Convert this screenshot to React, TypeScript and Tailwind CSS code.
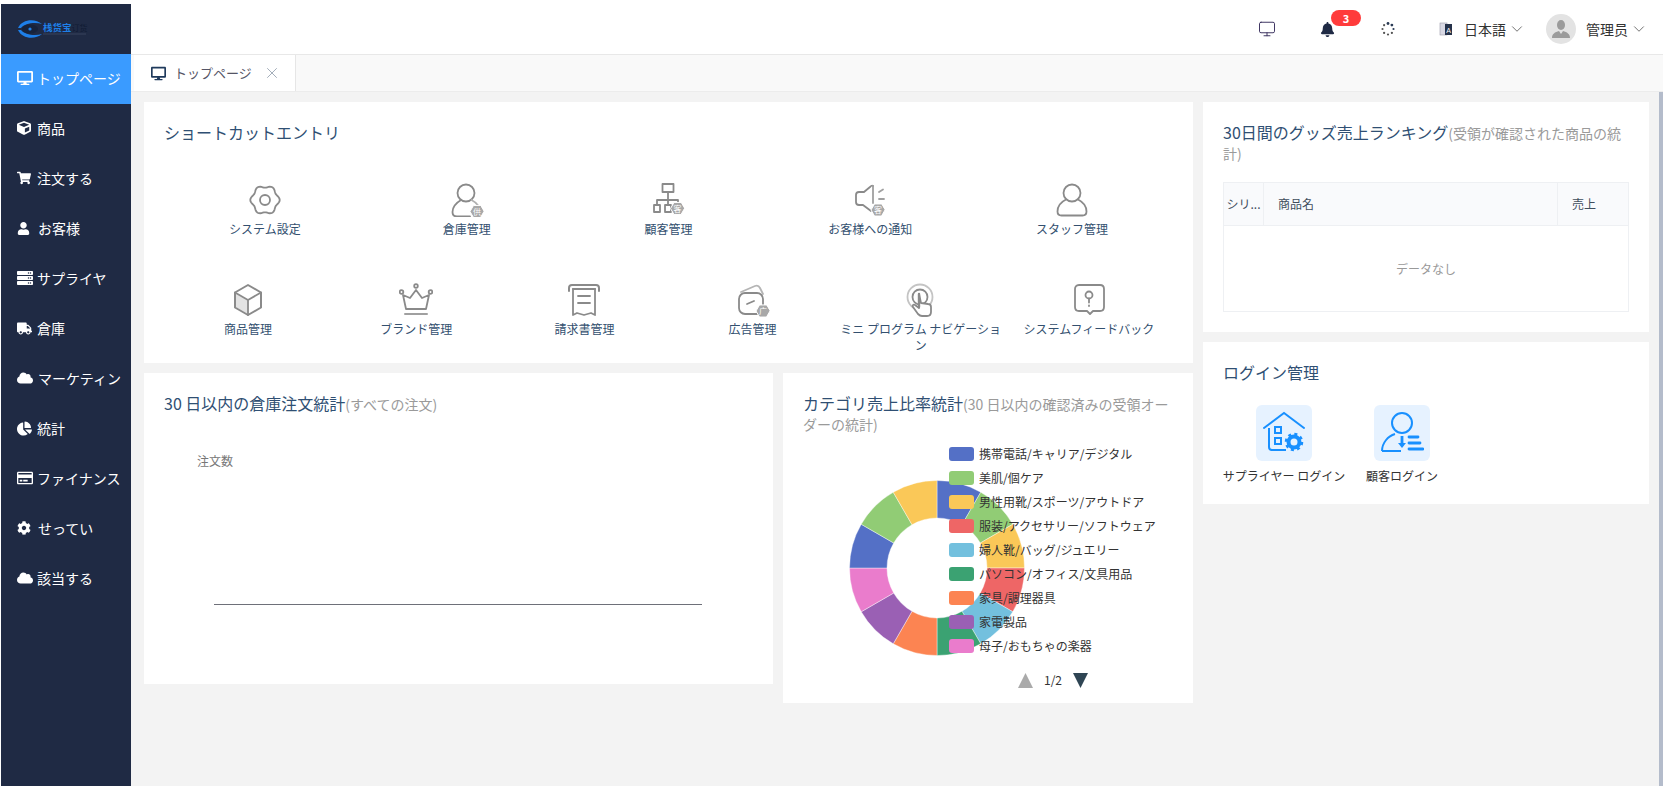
import { ChevronDown, Monitor, X } from "lucide-react";
import type { ReactNode } from "react";
import {
  FaBell,
  FaChartPie,
  FaCloud,
  FaCog,
  FaCube,
  FaDesktop,
  FaRegCreditCard,
  FaServer,
  FaShoppingCart,
  FaTruck,
  FaUser,
} from "react-icons/fa";

const menu = [
  { label: "トップページ", icon: <FaDesktop size={16} />, w: "w-[20px]", active: true },
  { label: "商品", icon: <FaCube size={14} />, w: "w-[20px]" },
  { label: "注文する", icon: <FaShoppingCart size={14} />, w: "w-[20px]" },
  { label: "お客様", icon: <FaUser size={13} />, w: "w-[21px]" },
  { label: "サプライヤ", icon: <FaServer size={16} />, w: "w-[20px]" },
  { label: "倉庫", icon: <FaTruck size={15} />, w: "w-[20px]" },
  { label: "マーケティン", icon: <FaCloud size={16} />, w: "w-[21px]" },
  { label: "統計", icon: <FaChartPie size={15} />, w: "w-[20px]" },
  { label: "ファイナンス", icon: <FaRegCreditCard size={16} />, w: "w-[20px]" },
  { label: "せってい", icon: <FaCog size={14} />, w: "w-[21px]" },
  { label: "該当する", icon: <FaCloud size={16} />, w: "w-[20px]" },
];

const g = { fill: "none", stroke: "#8a8a8a", strokeWidth: 1.8, strokeLinecap: "round", strokeLinejoin: "round" } as const;

function Badge({ x = 27, y = 27, ch }: { x?: number; y?: number; ch: string }) {
  const r = 7;
  const pts = [0, 60, 120, 180, 240, 300]
    .map((a) => `${x + r * Math.cos((a * Math.PI) / 180)},${y + r * Math.sin((a * Math.PI) / 180)}`)
    .join(" ");
  return (
    <g>
      <polygon points={pts} fill="#a8a8a8" stroke="#fff" strokeWidth={1} />
      <text x={x} y={y + 3} fontSize={8} fill="#fff" stroke="none" textAnchor="middle" fontFamily="'Noto Sans CJK SC', sans-serif">
        {ch}
      </text>
    </g>
  );
}

// six lobed outline of the settings icon
const flower = Array.from({ length: 73 }, (_, i) => {
  const t = (i * 5 * Math.PI) / 180;
  const r = 13.5 + 1.2 * Math.cos(6 * t);
  return `${i === 0 ? "M" : "L"}${(17 + r * Math.cos(t)).toFixed(2)} ${(17 + r * Math.sin(t)).toFixed(2)}`;
}).join(" ");

const icons: Record<string, ReactNode> = {
  gear: (
    <g {...g}>
      <path d={flower} />
      <circle cx="17" cy="17" r="5" />
    </g>
  ),
  person: (
    <g {...g}>
      <circle cx="16" cy="10" r="8.500" />
      <path d="M11 17C6 20 2.500 24 2.500 29c0 3 2 4.500 4.500 4.500h13" />
      <path d="M21.500 17c3 1.500 5.500 3.500 7 6" stroke="#b0b0b0" />
      <Badge x={27} y={28.500} ch="供" />
    </g>
  ),
  org: (
    <g {...g}>
      <rect x="11.500" y="1" width="11" height="8" />
      <path d="M17 9v13M6 22v-5h21v3" />
      <rect x="3" y="22" width="6" height="7" />
      <rect x="14" y="22" width="6" height="7" />
      <Badge x={26.500} y={25.500} ch="客" />
    </g>
  ),
  notice: (
    <g {...g}>
      <path d="M20 3c-1-1-2 0-3 1l-6 5H6c-2 0-3 1.500-3 3v7c0 2 1 3 3 3h4l8 6" />
      <path d="M20 3v17M26 9l4-2.500M26 16h5" stroke="#a0a0a0" />
      <Badge x={25} y={27} ch="客" />
    </g>
  ),
  staff: (
    <g {...g}>
      <circle cx="17" cy="10" r="8.500" />
      <path d="M11 16.500C6 19 2.500 23 2.500 28.500c0 3 2 4 4 4h21c2 0 4-1 4-4 0-5.500-3.500-9.500-8.500-12" />
    </g>
  ),
  box: (
    <g {...g}>
      <path d="M4.500 10.500L17 17.500V31L4.500 24z" fill="#e3e3e3" stroke="none" />
      <path d="M17 2l13 7.500v15L17 32 4 24.500v-15z" strokeWidth={2} />
      <path d="M4 9.500L17 17l13-7.500M17 17v15" />
    </g>
  ),
  crown: (
    <g {...g}>
      <circle cx="17" cy="3" r="1.800" />
      <circle cx="2.500" cy="9" r="1.800" />
      <circle cx="31.500" cy="9" r="1.800" />
      <path d="M17 7l-6 8-7-3 3 14h20l3-14-7 3z" />
      <path d="M6 31h22" strokeWidth={2} stroke="#a0a0a0" />
    </g>
  ),
  bill: (
    <g {...g}>
      <path d="M2 8V5c0-1.500 1-3 3-3h24c2 0 3 1.500 3 3v3" strokeWidth={2} />
      <path d="M6 6h22" strokeWidth={2} />
      <path d="M6 6v26l4-2 7 2 7-2 4 2V6" />
      <path d="M11 13h12M11 20h12" />
    </g>
  ),
  ad: (
    <g {...g}>
      <path d="M5 9l14-6c2-.8 4 0 5 2l3 6" stroke="#b5b5b5" />
      <rect x="3" y="10" width="24" height="21" rx="6" />
      <path d="M11 21l7-3" />
      <Badge x={27} y={28} ch="广" />
    </g>
  ),
  touch: (
    <g {...g}>
      <circle cx="16" cy="14" r="12.500" stroke="#c4c4c4" />
      <circle cx="16" cy="14" r="7.500" />
      <path d="M15 11v14l-4-3c-2-1-3 1-2 2l5 7c1 1 2 2 4 2h5c3 0 4-2 4-4v-5c0-2-1-3-3-3l-7-1z" fill="#fff" />
      <path d="M15 11v13" strokeWidth={2.400} />
    </g>
  ),
  help: (
    <g {...g}>
      <path d="M7 2h21c3 0 4 2 4 4v18c0 3-2 4-4 4h-7l-3 3-3-3H7c-3 0-4-2-4-4V6c0-2 1-4 4-4z" strokeWidth={1.800} />
      <circle cx="17" cy="12" r="3.500" />
      <path d="M17 15.500v4M17 22.500v.5" />
    </g>
  ),
};

function Shortcut({ icon, label, lw }: { icon: string; label: string; lw?: string }) {
  return (
    <div className="flex flex-col items-center h-[100px]">
      <svg width="34" height="34" viewBox="0 0 34 34" className="shrink-0">
        {icons[icon]}
      </svg>
      <div className={`mt-[4px] text-center text-[12px] leading-[16px] text-[#33506f] ${lw ?? ""}`}>{label}</div>
    </div>
  );
}

function Donut() {
  const colors = ["#5470c6", "#91cc75", "#fac858", "#ee6666", "#73c0de", "#3ba272", "#fc8452", "#9a60b4", "#ea7ccc", "#5470c6", "#91cc75", "#fac858"];
  const R = 87.5;
  const r = 50;
  const c = 88;
  const pt = (rad: number, deg: number) => {
    const a = ((deg - 90) * Math.PI) / 180;
    return `${c + rad * Math.cos(a)} ${c + rad * Math.sin(a)}`;
  };
  return (
    <svg width="176" height="176" viewBox="0 0 176 176">
      {colors.map((col, i) => {
        const a0 = i * 30;
        const a1 = a0 + 30;
        return (
          <path
            key={i}
            fill={col}
            stroke="#fff"
            strokeWidth={0.4}
            d={`M${pt(R, a0)} A${R} ${R} 0 0 1 ${pt(R, a1)} L${pt(r, a1)} A${r} ${r} 0 0 0 ${pt(r, a0)} Z`}
          />
        );
      })}
    </svg>
  );
}

const legend = [
  ["携帯電話/キャリア/デジタル", "bg-[#5470c6]"],
  ["美肌/個ケア", "bg-[#91cc75]"],
  ["男性用靴/スポーツ/アウトドア", "bg-[#fac858]"],
  ["服装/アクセサリー/ソフトウェア", "bg-[#ee6666]"],
  ["婦人靴/バッグ/ジュエリー", "bg-[#73c0de]"],
  ["パソコン/オフィス/文具用品", "bg-[#3ba272]"],
  ["家具/調理器具", "bg-[#fc8452]"],
  ["家電製品", "bg-[#9a60b4]"],
  ["母子/おもちゃの楽器", "bg-[#ea7ccc]"],
];

function Title({ children, sub }: { children: ReactNode; sub?: string }) {
  return (
    <div className="text-[16px] leading-[20px] text-[#2f4f73]">
      {children}
      {sub && <span className="text-[14px] leading-[16px] text-[#9a9a9a]">{sub}</span>}
    </div>
  );
}

export default function App() {
  return (
    <div
      className="h-[786px] w-[1663px] flex overflow-hidden bg-white pl-px pt-1"
      style={{ fontFamily: "'Noto Sans CJK JP', 'Noto Sans', sans-serif" }}
    >
      <aside className="w-[130px] shrink-0 bg-[#1f2a44] flex flex-col -mb-px">
        <div className="h-[50px] flex items-center pl-[17px] gap-[1px]">
          <svg width="24" height="18" viewBox="0 0 24 18">
            <path d="M0 8C4 -1 17 -2 24 4 17 2 7 3 3 8zM0 10c4 9 17 10 24 4-7 2-17 1-21-4z" fill="#1e7fe8" />
            <ellipse cx="12" cy="9" rx="8" ry="4.500" fill="#17233c" />
            <circle cx="12" cy="9" r="1.600" fill="#1e7fe8" />
          </svg>
          <div className="flex flex-col gap-[1px]">
            <div className="flex items-center">
              <span className="text-[9.500px] font-bold text-[#1e7fe8] leading-none">栈货宝</span>
              <span className="text-[8px] text-[#101b33] leading-none">订货</span>
            </div>
            <div className="w-[43px] h-[2px] bg-[#2b3650]" />
          </div>
        </div>
        {menu.map((m) => (
          <div
            key={m.label}
            className={`h-[50px] flex items-center pl-[16px] pb-[2px] text-[14px] text-white whitespace-nowrap overflow-hidden ${m.active ? "bg-[#3a9bff]" : ""}`}
          >
            <span className={`flex justify-start shrink-0 ${m.w}`}>{m.icon}</span>
            {m.label}
          </div>
        ))}
      </aside>

      <div className="flex-1 min-w-0 flex flex-col -mt-1">
        <header className="h-[55px] shrink-0 pt-[4px] border-b border-[#e8e8e8] flex items-center justify-end text-[14px] text-[#333]">
          <Monitor size={18} strokeWidth={1.300} className="text-[#3c3260] mr-[44px]" />
          <div className="relative mr-[46px]">
            <FaBell size={15} className="text-[#1f2a44]" />
            <span className="absolute -top-[12px] left-[11px] w-[30px] h-[16px] rounded-full bg-[#ff3b3b] text-white text-[11px] font-bold leading-[16px] text-center">
              3
            </span>
          </div>
          <svg width="14" height="14" viewBox="0 0 14 14" className="mr-[44px]">
            {[0, 45, 90, 135, 180, 225, 270, 315].map((a, i) => (
              <circle key={a} cx="7" cy="1.500" r={i < 2 ? 1.400 : 1.100} fill={i < 3 ? "#2a3b55" : "#555"} transform={`rotate(${a} 7 7)`} />
            ))}
          </svg>
          <svg width="14" height="16" viewBox="0 0 14 16" className="mr-[11px]">
            <rect x="1" y="2" width="7" height="12" fill="#d9d9e4" stroke="#9a9aa8" strokeWidth={0.6} />
            <rect x="6" y="3" width="7" height="11" fill="#26324a" />
            <text x="9.500" y="12" fontSize={7} fill="#fff" textAnchor="middle" fontFamily="'Liberation Sans', sans-serif">
              A
            </text>
          </svg>
          <span>日本語</span>
          <ChevronDown size={18} strokeWidth={1} className="ml-[2px] mr-[20px] text-[#444]" />
          <div className="w-[30px] h-[30px] rounded-full bg-[#e3e3e3] flex items-center justify-center mr-[10px]">
            <svg width="18" height="20" viewBox="0 0 18 20">
              <ellipse cx="9" cy="6" rx="4" ry="5" fill="#9b9b9b" />
              <path d="M0 19c0-4 3-6 7-7l2 3 2-3c4 1 7 3 7 7z" fill="#9b9b9b" />
            </svg>
          </div>
          <span>管理员</span>
          <ChevronDown size={18} strokeWidth={1} className="ml-[2px] mr-[15px] text-[#444]" />
        </header>

        <div className="h-[37px] shrink-0 bg-[#f9f9f9] border-b border-[#ececec] flex pl-[3px] text-[13px]">
          <div className="w-[162px] h-[36px] bg-white border-r border-[#e6e6e6] flex items-center pl-[17px] text-[#556]">
            <FaDesktop size={15} className="text-[#1f3a5c] mr-[8px]" />
            トップページ
            <X size={18} strokeWidth={1} className="ml-[11px] text-[#8593a3]" />
          </div>
        </div>

        <div className="flex-1 min-h-0 bg-[#f3f3f3] relative flex gap-[10px] pl-[13px] pt-[10px]">
          <div className="absolute right-0 top-0 w-[4px] h-full bg-[#b4bccb]" />

          <div className="w-[1049px] shrink-0 flex flex-col gap-[10px]">
            <section className="h-[261px] bg-white px-[20px] pt-[20px]">
              <Title>ショートカットエントリ</Title>
              <div className="grid grid-cols-5 mt-[41px]">
                <Shortcut icon="gear" label="システム設定" />
                <Shortcut icon="person" label="倉庫管理" />
                <Shortcut icon="org" label="顧客管理" />
                <Shortcut icon="notice" label="お客様への通知" />
                <Shortcut icon="staff" label="スタッフ管理" />
              </div>
              <div className="grid grid-cols-6">
                <Shortcut icon="box" label="商品管理" />
                <Shortcut icon="crown" label="ブランド管理" />
                <Shortcut icon="bill" label="請求書管理" />
                <Shortcut icon="ad" label="広告管理" />
                <Shortcut icon="touch" label="ミニ プログラム ナビゲーション" lw="w-[165px]" />
                <Shortcut icon="help" label="システムフィードバック" />
              </div>
            </section>

            <div className="flex gap-[10px] items-start">
              <section className="w-[629px] h-[311px] bg-white pl-[20px] pt-[20px]">
                <Title sub="(すべての注文)">30 日以内の倉庫注文統計</Title>
                <div className="ml-[33px] mt-[40px] text-[12px] leading-[16px] text-[#777]">注文数</div>
                <div className="ml-[50px] mt-[135px] w-[488px] h-px bg-[#6e7079]" />
              </section>

              <section className="w-[410px] h-[330px] bg-white pl-[20px] pr-[20px] pt-[20px] relative">
                <Title sub="(30 日以内の確認済みの受領オーダーの統計)">カテゴリ売上比率統計</Title>
                <div className="mt-[47px] ml-[46px]">
                  <Donut />
                </div>
                <div className="absolute left-[166px] top-[72px] flex flex-col gap-[7px]">
                  {legend.map(([t, c]) => (
                    <div key={t} className="h-[17px] flex items-center text-[12px] text-[#333] whitespace-nowrap">
                      <span className={`w-[25px] h-[14px] rounded-[3px] mr-[5px] ${c}`} />
                      {t}
                    </div>
                  ))}
                </div>
                <div className="absolute left-[235px] top-[298px] flex items-center text-[12px] text-[#333]">
                  <svg width="15" height="15" viewBox="0 0 15 15">
                    <path d="M7.500 0L15 15H0z" fill="#aaa" />
                  </svg>
                  <span className="mx-[11px]">1/2</span>
                  <svg width="15" height="15" viewBox="0 0 15 15">
                    <path d="M0 0h15L7.500 15z" fill="#2f4554" />
                  </svg>
                </div>
              </section>
            </div>
          </div>

          <div className="w-[446px] shrink-0 flex flex-col gap-[10px]">
            <section className="h-[230px] bg-white px-[20px] pt-[20px]">
              <Title sub="(受領が確認された商品の統計)">30日間のグッズ売上ランキング</Title>
              <div className="mt-[20px] border border-[#eef0f3] text-[12px] text-[#3f4d5c]">
                <div className="flex h-[43px] items-center bg-[#f9fafc] border-b border-[#eef0f3]">
                  <div className="w-[40px] h-full border-r border-[#eef0f3] flex items-center justify-center">シリ...</div>
                  <div className="flex-1 h-full pl-[14px] flex items-center">商品名</div>
                  <div className="w-[71px] h-full border-l border-[#eef0f3] pl-[14px] flex items-center">売上</div>
                </div>
                <div className="h-[85px] flex items-center justify-center text-[#999]">データなし</div>
              </div>
            </section>

            <section className="h-[162px] bg-white pl-[20px] pt-[20px]">
              <Title>ログイン管理</Title>
              <div className="flex mt-[23px] ml-[2px] text-[12px] text-[#333]">
                <div className="flex flex-col items-center w-[118px]">
                  <div className="w-[56px] h-[56px] rounded-[6px] bg-[#e6f2ff] flex items-center justify-center">
                    <svg width="44" height="44" viewBox="0 0 44 44" fill="none" stroke="#1890ff" strokeWidth={2}>
                      <path d="M2 17L22 2l20 15" strokeLinecap="round" />
                      <path d="M7 17v19c0 2 1 3 3 3h14" />
                      <rect x="13" y="16" width="6" height="6" />
                      <rect x="13" y="27" width="6" height="6" />
                      <circle cx="32" cy="31" r="5.500" strokeWidth={4} />
                      <circle cx="32" cy="31" r="8" strokeWidth={2.500} strokeDasharray="3 3.300" />
                    </svg>
                  </div>
                  <div className="mt-[6px] whitespace-nowrap">サプライヤー ログイン</div>
                </div>
                <div className="flex flex-col items-center w-[118px]">
                  <div className="w-[56px] h-[56px] rounded-[6px] bg-[#e6f2ff] flex items-center justify-center">
                    <svg width="44" height="44" viewBox="0 0 44 44" fill="none" stroke="#1890ff" strokeWidth={2}>
                      <circle cx="22" cy="12" r="10" />
                      <path d="M2 40c0-8 6-15 13-17M2 40h19" />
                      <path d="M22 25v9" strokeWidth={2.800} />
                      <path d="M18 32h8l-4 5z" fill="#1890ff" stroke="none" />
                      <path d="M29 26h9M29 32h11M29 38h14" strokeWidth={2.800} strokeLinecap="round" />
                    </svg>
                  </div>
                  <div className="mt-[6px] whitespace-nowrap">顧客ログイン</div>
                </div>
              </div>
            </section>
          </div>
        </div>
      </div>
    </div>
  );
}
